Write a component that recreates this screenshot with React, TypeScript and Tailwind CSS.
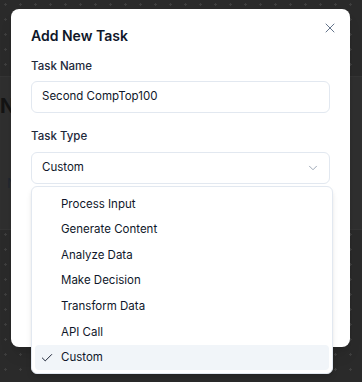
import { X, ChevronDown, Check } from "lucide-react";

const taskTypes = [
  "Process Input",
  "Generate Content",
  "Analyze Data",
  "Make Decision",
  "Transform Data",
  "API Call",
  "Custom",
];

const dotted =
  "bg-[#2a2a2a] bg-[radial-gradient(circle,#3e3e3e_1px,transparent_1.2px)] bg-[size:15px_15px] bg-[position:-2px_-3px]";

export default function App() {
  const selected = "Custom";

  return (
    <div className="relative w-[362px] h-[382px] overflow-hidden font-['Inter',sans-serif]">
      {/* page behind the dialog */}
      <div className="flex flex-col h-full">
        <div className={`h-[76px] ${dotted}`} />
        <div className="h-[154px] bg-[#2f2f2f] border-y border-[#343434] flex flex-col">
          <div className="w-[11px] overflow-hidden whitespace-nowrap mt-[17px] text-[20px] font-bold text-[#141414] leading-6">Ne</div>
          <div className="w-[11px] overflow-hidden whitespace-nowrap mt-[56px] pl-[7px] text-[13px] text-[#1f2630]">N</div>
        </div>
        <div className={`flex-1 ${dotted}`} />
      </div>

      {/* dialog */}
      <div className="absolute left-[11px] top-[9px] w-[339px] h-[338px] bg-white rounded-lg shadow-lg px-5 pt-[15px]">
        <button className="absolute right-[12px] top-[11px] text-[#64748b]">
          <X size={16} strokeWidth={1.5} />
        </button>
        <h2 className="text-[14px] leading-6 font-semibold text-[#0f172a]">Add New Task</h2>

        <label className="block mt-[10px] text-[11.5px] leading-4 font-medium text-[#1e293b]">Task Name</label>
        <div className="mt-[7px] h-[32px] rounded-md border border-[#e2e8f0] flex items-center px-[10px] text-[11.5px] text-[#0f172a]">
          Second CompTop100
        </div>

        <label className="block mt-[15px] text-[11.5px] leading-4 font-medium text-[#1e293b]">Task Type</label>
        <div className="mt-[8px] h-[32px] rounded-md border border-[#e2e8f0] flex items-center justify-between pl-[10px] pr-[9px] text-[11.5px] text-[#0f172a]">
          <span>Custom</span>
          <ChevronDown size={14} strokeWidth={1.5} className="text-[#64748b] opacity-70" />
        </div>
      </div>

      {/* select menu */}
      <div className="absolute left-[31px] top-[186px] w-[302px] bg-white rounded-md border border-[#e2e8f0] shadow-md px-[3px] pt-[4px] pb-[3px]">
        {taskTypes.map((t) => (
          <div
            key={t}
            className={`relative h-[25.6px] flex items-center pl-[26px] pt-[1px] rounded text-[11.5px] text-[#0f172a] ${
              t === selected ? "bg-[#f1f5f9]" : ""
            }`}
          >
            {t === selected && (
              <Check size={14} strokeWidth={1.6} className="absolute left-[5px] text-[#0f172a]" />
            )}
            {t}
          </div>
        ))}
      </div>
    </div>
  );
}
